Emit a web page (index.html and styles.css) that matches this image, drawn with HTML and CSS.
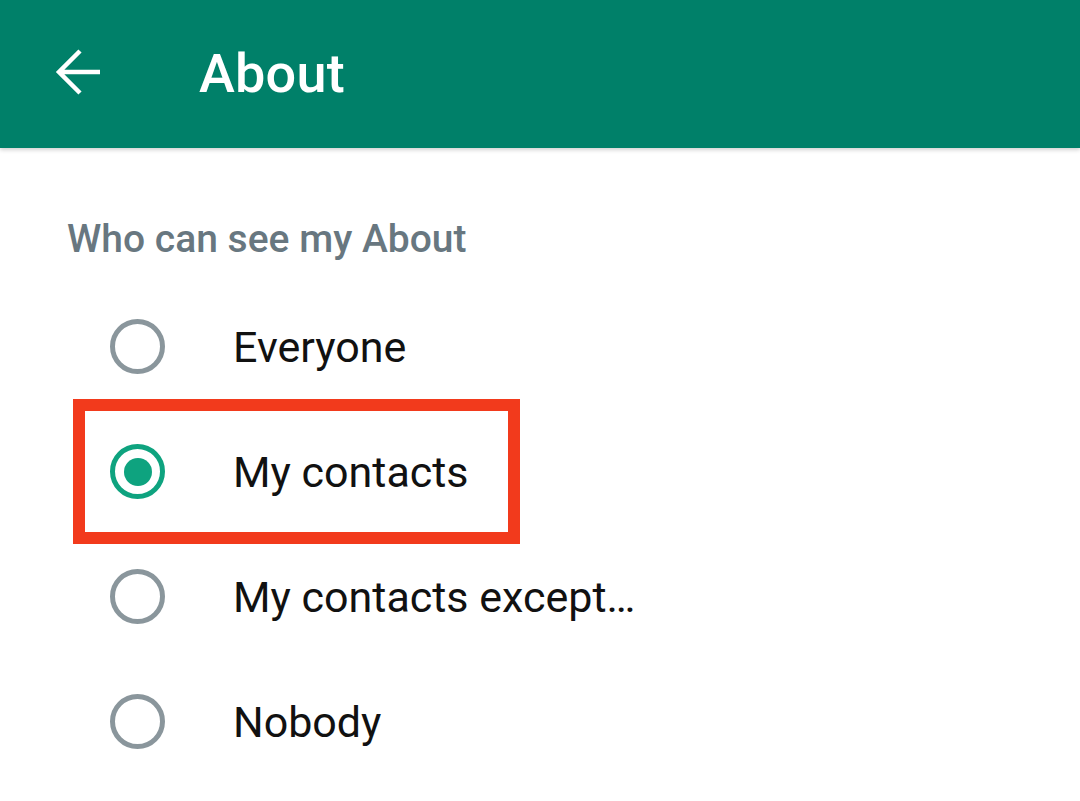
FILE: index.html
```html
<!doctype html>
<html>
<head>
  <title>About privacy</title>
  <meta charset='UTF-8'>
  <meta name='viewport' content='width=device-width, initial-scale=1'>
  <link rel="stylesheet" href="styles.css">
</head>
<body>
  <header class="toolbar">
    <span class="back">
      <svg width="48" height="48" viewBox="0 0 48 48" aria-hidden="true">
        <path d="M46 24H5M26 3L5 24l21 21" fill="none" stroke="#fff" stroke-width="4.5" stroke-linejoin="miter"/>
      </svg>
    </span>
    <h1>About</h1>
  </header>
  <main>
    <h2>Who can see my About</h2>
    <ul class="options">
      <li><span class="radio"></span>Everyone</li>
      <li class="checked marked"><span class="radio"></span>My contacts</li>
      <li><span class="radio"></span>My contacts except…</li>
      <li><span class="radio"></span>Nobody</li>
    </ul>
  </main>
</body>
</html>
```

FILE: styles.css
```css
html, body { height: 100% }
body {
  margin: 0;
  background: #fff;
  color: #111;
  font-family: Roboto, 'Noto Sans', sans-serif;
  overflow: hidden }
.toolbar {
  height: 148px;
  background: #008069;
  display: flex;
  align-items: center;
  box-shadow: 0 2px 4px rgba(0, 0, 0, .18);
  position: relative }
  .back {
    display: flex;
    margin-left: 54px;
    margin-top: -4px }
  .toolbar h1 {
    margin: 0 0 0 97px;
    font: 500 54px/1 Roboto, sans-serif;
    color: #fff;
    letter-spacing: .2px }
main { padding: 69px 0 0 67px }
  h2 {
    margin: 0;
    font: 500 39px/44px Roboto, sans-serif;
    color: #687780 }
  .options {
    list-style: none;
    margin: 23px 0 0;
    padding: 0 }
    .options li {
      height: 125px;
      display: flex;
      align-items: center;
      gap: 68px;
      padding-left: 43px;
      font-size: 43px;
      position: relative }
    .radio {
      width: 55px;
      height: 55px;
      box-sizing: border-box;
      border: 5px solid #8a969c;
      border-radius: 50%;
      display: flex;
      align-items: center;
      justify-content: center;
      flex: none }
    .checked .radio { border-color: #0ea37f }
    .checked .radio::before {
      content: "";
      width: 28px;
      height: 28px;
      border-radius: 50%;
      background: #0ea37f }
    .marked::after {
      content: "";
      position: absolute;
      left: 6px;
      top: -10px;
      width: 447px;
      height: 145px;
      box-sizing: border-box;
      border: 12px solid #f23a1c }
```
